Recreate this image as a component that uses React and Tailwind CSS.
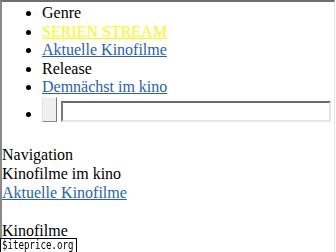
import React from "react";

export default function App() {
  return (
    <div className="relative w-[336px] h-[252px] overflow-hidden bg-white">
      <div className="w-[335px] h-[260px] pt-[2px] border-t-2 border-l-2 border-r border-t-[#6f6f6f] border-l-[#8a8a8a] border-r-[#e2e2e2] font-['Liberation_Serif',serif] text-[16px] text-black">
        <ul className="list-disc pl-[40px] m-0 leading-[18.5px] mb-[22px]">
          <li>Genre</li>
          <li>
            <a className="underline text-[#f4f34e] [text-shadow:0_0_3px_#ffffa0]">SERIEN STREAM</a>
          </li>
          <li>
            <a className="underline text-[#2a62a6]">Aktuelle Kinofilme</a>
          </li>
          <li>Release</li>
          <li>
            <a className="underline text-[#2a62a6]">Demnächst im kino</a>
          </li>
          <li>
            <span className="inline-flex items-end gap-[4px] align-[-3px]">
              <span className="block w-[15px] h-[25px] bg-[#efefef] border border-t-[#f6f6f6] border-l-[#e4e4e4] border-r-[#7a7a7a] border-b-[#8a8a8a]"></span>
              <input
                type="text"
                className="block w-[270px] h-[21px] bg-white border-2 border-t-[#6a6a6a] border-l-[#7a7a7a] border-r-[#e6e6e6] border-b-[#e6e6e6] outline-none"
              />
            </span>
          </li>
        </ul>
        <div className="leading-[19px]">
          <div>Navigation</div>
          <div>Kinofilme im kino</div>
          <div>
            <a className="underline text-[#2a62a6]">Aktuelle Kinofilme</a>
          </div>
          <div className="h-[19px]"></div>
          <div>Kinofilme</div>
        </div>
      </div>
      <div className="absolute left-0 top-[238px] w-[77px] h-[18px] bg-white border border-black pl-[1px] font-['DejaVu_Sans_Mono',monospace] text-[12px] leading-[13px] text-black whitespace-nowrap">
        <span className="inline-block origin-left scale-x-[0.76]">$iteprice.org</span>
      </div>
    </div>
  );
}
